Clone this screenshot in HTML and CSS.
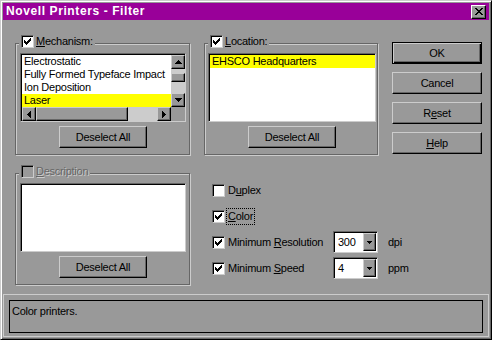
FILE: index.html
```html
<!DOCTYPE html>
<html lang="en">
<head>
    <meta charset="UTF-8">
    <link rel="stylesheet" href="styles.css">
    <title>Novell Printers - Filter</title>
</head>
<body>
<div class="window">
    <div class="titlebar">
        <span class="title">Novell Printers - Filter</span>
        <span class="close">
            <svg width="8" height="7" viewBox="0 0 8 7" shape-rendering="crispEdges"><path d="M0 0h2v1h-2z M6 0h2v1h-2z M1 1h2v1h-2z M5 1h2v1h-2z M2 2h4v1h-4z M3 3h2v1h-2z M2 4h4v1h-4z M1 5h2v1h-2z M5 5h2v1h-2z M0 6h2v1h-2z M6 6h2v1h-2z"/></svg>
        </span>
    </div>

    <div class="main">
        <!-- mechanism -->
        <div class="group left">
            <div class="legend">
                <span class="check"><svg width="7" height="7" viewBox="0 0 7 7" shape-rendering="crispEdges"><path d="M6 0h1v1h-1z M5 1h2v1h-2z M0 2h1v1h-1z M4 2h3v1h-3z M0 3h2v1h-2z M3 3h3v1h-3z M0 4h5v1h-5z M1 5h3v1h-3z M2 6h1v1h-1z"/></svg></span>
                <span><u>M</u>echanism:</span>
            </div>
            <div class="listbox scrolled">
                <ul class="items">
                    <li>Electrostatic</li>
                    <li>Fully Formed Typeface Impact</li>
                    <li>Ion Deposition</li>
                    <li class="selected">Laser</li>
                </ul>
                <div class="vscroll">
                    <span class="sbtn"><svg width="7" height="4" viewBox="0 0 7 4" shape-rendering="crispEdges"><path d="M3 0h1v1h-1z M2 1h3v1h-3z M1 2h5v1h-5z M0 3h7v1h-7z"/></svg></span>
                    <span class="track"><span class="thumb vthumb"></span></span>
                    <span class="sbtn"><svg width="7" height="4" viewBox="0 0 7 4" shape-rendering="crispEdges"><path d="M0 0h7v1h-7z M1 1h5v1h-5z M2 2h3v1h-3z M3 3h1v1h-1z"/></svg></span>
                </div>
                <div class="hscroll">
                    <span class="sbtn"><svg width="4" height="7" viewBox="0 0 4 7" shape-rendering="crispEdges"><path d="M3 0h1v7h-1z M2 1h1v5h-1z M1 2h1v3h-1z M0 3h1v1h-1z"/></svg></span>
                    <span class="thumb hthumb"></span>
                    <span class="track"></span>
                    <span class="sbtn"><svg width="4" height="7" viewBox="0 0 4 7" shape-rendering="crispEdges"><path d="M0 0h1v7h-1z M1 1h1v5h-1z M2 2h1v3h-1z M3 3h1v1h-1z"/></svg></span>
                </div>
                <div class="corner"></div>
            </div>
            <button class="btn deselect">Deselect All</button>
        </div>

        <!-- location -->
        <div class="group loc">
            <div class="legend">
                <span class="check"><svg width="7" height="7" viewBox="0 0 7 7" shape-rendering="crispEdges"><path d="M6 0h1v1h-1z M5 1h2v1h-2z M0 2h1v1h-1z M4 2h3v1h-3z M0 3h2v1h-2z M3 3h3v1h-3z M0 4h5v1h-5z M1 5h3v1h-3z M2 6h1v1h-1z"/></svg></span>
                <span><u>L</u>ocation:</span>
            </div>
            <div class="listbox">
                <ul class="items">
                    <li class="selected">EHSCO Headquarters</li>
                </ul>
            </div>
            <button class="btn deselect">Deselect All</button>
        </div>

        <div class="buttons">
            <button class="btn default">OK</button>
            <button class="btn">Cancel</button>
            <button class="btn">R<u>e</u>set</button>
            <button class="btn"><u>H</u>elp</button>
        </div>

        <!-- description -->
        <div class="group left">
            <div class="legend">
                <span class="check disabled"></span>
                <span class="grayed"><u>D</u>escription</span>
            </div>
            <div class="listbox"></div>
            <button class="btn deselect">Deselect All</button>
        </div>

        <div class="options">
            <div class="opt">
                <span class="check"></span>
                <span class="opt-text">D<u>u</u>plex</span>
            </div>
            <div class="opt">
                <span class="check"><svg width="7" height="7" viewBox="0 0 7 7" shape-rendering="crispEdges"><path d="M6 0h1v1h-1z M5 1h2v1h-2z M0 2h1v1h-1z M4 2h3v1h-3z M0 3h2v1h-2z M3 3h3v1h-3z M0 4h5v1h-5z M1 5h3v1h-3z M2 6h1v1h-1z"/></svg></span>
                <span class="opt-text focus"><u>C</u>olor</span>
            </div>
            <div class="opt">
                <span class="check"><svg width="7" height="7" viewBox="0 0 7 7" shape-rendering="crispEdges"><path d="M6 0h1v1h-1z M5 1h2v1h-2z M0 2h1v1h-1z M4 2h3v1h-3z M0 3h2v1h-2z M3 3h3v1h-3z M0 4h5v1h-5z M1 5h3v1h-3z M2 6h1v1h-1z"/></svg></span>
                <span class="opt-text wide">Minimum <u>R</u>esolution</span>
                <span class="combo"><span class="value">300</span><span class="dd"><svg width="5" height="3" viewBox="0 0 5 3" shape-rendering="crispEdges"><path d="M0 0h5v1h-5z M1 1h3v1h-3z M2 2h1v1h-1z"/></svg></span></span>
                <span class="unit">dpi</span>
            </div>
            <div class="opt">
                <span class="check"><svg width="7" height="7" viewBox="0 0 7 7" shape-rendering="crispEdges"><path d="M6 0h1v1h-1z M5 1h2v1h-2z M0 2h1v1h-1z M4 2h3v1h-3z M0 3h2v1h-2z M3 3h3v1h-3z M0 4h5v1h-5z M1 5h3v1h-3z M2 6h1v1h-1z"/></svg></span>
                <span class="opt-text wide">Minimum <u>S</u>peed</span>
                <span class="combo"><span class="value">4</span><span class="dd"><svg width="5" height="3" viewBox="0 0 5 3" shape-rendering="crispEdges"><path d="M0 0h5v1h-5z M1 1h3v1h-3z M2 2h1v1h-1z"/></svg></span></span>
                <span class="unit">ppm</span>
            </div>
        </div>
    </div>

    <div class="status">
        <div class="status-text">Color printers.</div>
    </div>
</div>
</body>
</html>
```

FILE: styles.css
```css
*{
    margin: 0;
    padding: 0;
    box-sizing: border-box;
}

html, body{
    width: 492px;
    height: 340px;
    background-color: #999999;
    overflow: hidden;
}

body{
    font-family: "Liberation Sans", Arial, sans-serif;
    font-size: 11px;
    line-height: 13px;
    letter-spacing: -0.25px;
    color: #000;
}

.window{
    width: 492px;
    height: 340px;
    padding: 2px;
    border: 1px solid;
    border-color: #cccccc #000 #000 #cccccc;
    box-shadow: inset 1px 1px 0 #fff, inset -1px -1px 0 #666;
    display: flex;
    flex-direction: column;
}

/* title bar */

.titlebar{
    height: 18px;
    background-color: #990099;
    display: flex;
    align-items: center;
    justify-content: space-between;
    padding: 0 3px 0 3px;
}

.title{
    color: #fff;
    font-weight: bold;
    font-size: 12px;
    letter-spacing: 0.6px;
}

.close{
    width: 15px;
    height: 14px;
    background-color: #999999;
    border: 1px solid;
    border-color: #fff #000 #000 #fff;
    box-shadow: inset -1px -1px 0 #666;
    display: flex;
    align-items: center;
    justify-content: center;
}

/* layout */

.main{
    display: grid;
    grid-template-columns: 175px 174px 90px;
    grid-template-rows: 112px 112px;
    column-gap: 14px;
    row-gap: 18px;
    padding: 23px 0 0 12px;
}

.group{
    position: relative;
    border: 1px solid #666;
    box-shadow: 1px 1px 0 #cccccc, inset 1px 1px 0 #cccccc;
    display: flex;
    flex-direction: column;
    padding: 9px 3px 0 4px;
}

.group.loc{
    padding: 9px 1px 0 3px;
}

.legend{
    position: absolute;
    top: -9px;
    left: 3px;
    display: flex;
    align-items: center;
    gap: 2px;
    padding: 0 2px;
    background-color: #999999;
}

u{
    text-decoration: underline;
    text-underline-offset: 1px;
}

/* checkbox */

.check{
    display: block;
    flex: none;
    width: 13px;
    height: 13px;
    border: 1px solid;
    border-color: #666 #cccccc #cccccc #666;
    box-shadow: inset 1px 1px 0 #000;
    background-color: #fff;
    padding: 2px 0 0 2px;
}

.check svg{
    display: block;
}

.check.disabled{
    background-color: #999999;
}

.grayed{
    color: #666;
    text-shadow: 1px 1px 0 #cccccc;
}

/* list boxes */

.listbox{
    height: 69px;
    background-color: #fff;
    border: 1px solid;
    border-color: #666 #cccccc #cccccc #666;
    box-shadow: inset 1px 1px 0 #000;
    padding: 1px 0 0 1px;
}

.listbox.scrolled{
    display: grid;
    grid-template-columns: 1fr 14px;
    grid-template-rows: 52px 14px;
    background-color: #999999;
}

.items{
    list-style: none;
    background-color: #fff;
    overflow: hidden;
}

.items li{
    height: 13px;
    padding-left: 2px;
    white-space: nowrap;
}

.items li.selected{
    background-color: #ffff00;
}

.vscroll{
    display: flex;
    flex-direction: column;
}

.hscroll{
    display: flex;
}

.sbtn, .thumb, .dd{
    background-color: #999999;
    border: 1px solid;
    border-color: #cccccc #000 #000 #cccccc;
    box-shadow: inset -1px -1px 0 #666;
    display: flex;
    align-items: center;
    justify-content: center;
}

.sbtn{
    flex: none;
    width: 14px;
    height: 14px;
}

.track{
    flex: 1;
    background-color: #cccccc;
}

.vthumb{
    margin-top: 4px;
    height: 9px;
}

.hthumb{
    flex: none;
    width: 92px;
}

.corner{
    background-color: #999999;
}

/* buttons */

.btn{
    font-family: "Liberation Sans", Arial, sans-serif;
    font-size: 11px;
    letter-spacing: -0.25px;
    color: #000;
    height: 22px;
    background-color: #999999;
    border: 1px solid;
    border-color: #cccccc #000 #000 #cccccc;
    box-shadow: inset -1px -1px 0 #666;
}

.deselect{
    width: 88px;
    margin-top: 4px;
    align-self: center;
}

.buttons{
    display: flex;
    flex-direction: column;
    gap: 8px;
    margin-top: -1px;
}

.buttons .btn{
    width: 90px;
}

.btn.default{
    border: 1px solid #000;
    box-shadow: inset 1px 1px 0 #cccccc, inset -1px -1px 0 #000, inset -2px -2px 0 #666;
}

/* options */

.options{
    grid-column: 2 / 4;
    display: flex;
    flex-direction: column;
    gap: 4px;
    padding: 6px 0 0 8px;
}

.opt{
    height: 22px;
    display: flex;
    align-items: center;
}

.opt-text{
    margin-left: 3px;
}

.opt-text.focus{
    margin-left: 2px;
    padding: 1px 1px;
    outline: 1px dotted #000;
}

.opt-text.wide{
    width: 105px;
}

.combo{
    width: 45px;
    height: 22px;
    display: flex;
    background-color: #fff;
    border: 1px solid;
    border-color: #666 #cccccc #cccccc #666;
    box-shadow: inset 1px 1px 0 #000;
    padding: 1px 1px 1px 1px;
}

.value{
    flex: 1;
    padding-left: 3px;
    line-height: 18px;
}

.dd{
    width: 13px;
    flex: none;
}

.unit{
    margin-left: 10px;
}

/* status bar */

.status{
    margin-top: 9px;
    flex: 1;
    border: 1px solid #cccccc;
    padding: 5px 5px 3px 5px;
}

.status-text{
    height: 33px;
    border: 1px solid #000;
    padding: 4px 2px;
}
```
